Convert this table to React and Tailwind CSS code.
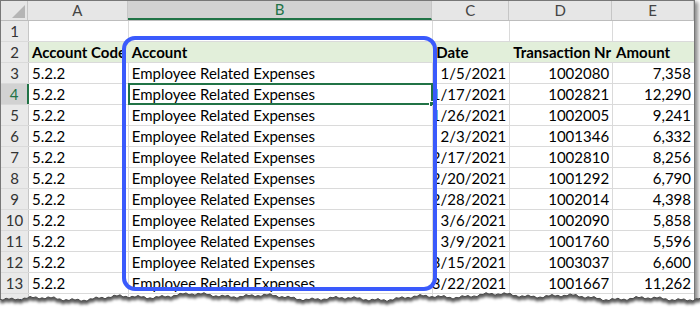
const cols = ['w-[28px]', 'w-[100px]', 'w-[305px]', 'w-[77px]', 'w-[103px]', 'w-[82px]']

const rows = [
  ['1/5/2021', '1002080', '7,358'],
  ['1/17/2021', '1002821', '12,290'],
  ['1/26/2021', '1002005', '9,241'],
  ['2/3/2021', '1001346', '6,332'],
  ['2/17/2021', '1002810', '8,256'],
  ['2/20/2021', '1001292', '6,790'],
  ['2/28/2021', '1002014', '4,398'],
  ['3/6/2021', '1002090', '5,858'],
  ['3/9/2021', '1001760', '5,596'],
  ['3/15/2021', '1003037', '6,600'],
  ['3/22/2021', '1001667', '11,262'],
]

// jagged bottom edge of the torn sheet
function tearPoints() {
  const pts = []
  for (let x = 0, i = 0; x <= 702; x += 3, i++) {
    const y =
      14 +
      2.0 * Math.sin(x * 0.021 + 0.4) +
      1.4 * Math.sin(x * 0.083 + 1.3) +
      0.9 * Math.sin(x * 0.29 + 2.1) +
      (i % 2 ? 0.7 : -0.6)
    pts.push([x, Math.max(8, y)])
  }
  return pts
}

function TornEdge() {
  const pts = tearPoints()
  const line = pts.map(([x, y]) => `${x},${y.toFixed(1)}`).join(' ')
  const below = `${line} 702,40 0,40`
  const shadow = pts.map(([x, y]) => `${x},${(y + 3.5).toFixed(1)}`).join(' ') + ' 702,-10 0,-10'
  return (
    <svg className="absolute left-0 top-[283px]" width="700" height="29" viewBox="0 0 700 29">
      <defs>
        <filter id="soft" x="-5%" y="-50%" width="110%" height="200%">
          <feGaussianBlur stdDeviation="1.7" />
        </filter>
        <clipPath id="under">
          <polygon points={below} />
        </clipPath>
      </defs>
      <polygon points={below} fill="#fff" />
      <g clipPath="url(#under)">
        <polygon points={shadow} fill="rgba(0,0,0,0.65)" filter="url(#soft)" />
      </g>
      <polyline points={line} fill="none" stroke="#4a4a4a" strokeWidth="1" />
    </svg>
  )
}

function ColHeader({ label, active, w }) {
  return (
    <div
      className={`${w} h-full flex items-center justify-center border-r border-[#c6c6c6] ${
        active ? 'bg-[#d2d2d2] text-[#217346] border-b-2 border-b-[#217346]' : 'text-[#444]'
      }`}
    >
      {label}
    </div>
  )
}

function RowHeader({ n, active }) {
  return (
    <div
      className={`w-[28px] h-full flex items-center justify-center ${
        active
          ? 'bg-[#d2d2d2] text-[#217346] border-r-2 border-[#217346]'
          : 'bg-[#e9e9e9] text-[#333] border-r border-[#c6c6c6]'
      }`}
    >
      {n}
    </div>
  )
}

function Cell({ w, children, right, bold, green, last }) {
  return (
    <div
      className={`${w} h-full flex items-center overflow-hidden whitespace-nowrap px-[3px] ${
        right ? 'justify-end' : ''
      } ${bold ? 'font-bold' : ''} ${
        green ? 'bg-[#e2efda]' : last ? '' : 'border-r border-[#dadada]'
      }`}
    >
      {children}
    </div>
  )
}

export default function App() {
  return (
    <div className="w-[700px] h-[312px] bg-white overflow-hidden relative font-['Lato','Liberation_Sans',sans-serif] text-[15px] text-black">
      <div className="w-[695px] h-[320px] border-t border-l border-r border-[#777] shadow-[3px_2px_4px_rgba(0,0,0,0.45)] bg-white">
        {/* column letters */}
        <div className="flex h-[20px] border-b border-[#bdbdbd] bg-[#e6e6e6]">
          <div className="w-[27px] h-full border-r border-[#c6c6c6] relative bg-[#e6e6e6]">
            <div className="absolute right-[2px] bottom-[2px] w-0 h-0 border-l-[13px] border-l-transparent border-b-[13px] border-b-[#b5b5b5]" />
          </div>
          <ColHeader w={cols[1]} label="A" />
          <ColHeader w={cols[2]} label="B" active />
          <ColHeader w={cols[3]} label="C" />
          <ColHeader w={cols[4]} label="D" />
          <ColHeader w="w-[82px]" label="E" />
        </div>

        {/* row 1 */}
        <div className="flex h-[21px] border-b border-[#dadada]">
          <RowHeader n={1} />
          <Cell w={cols[1]} />
          <Cell w={cols[2]} />
          <Cell w={cols[3]} />
          <Cell w={cols[4]} />
          <Cell w="w-[81px]" last />
        </div>

        {/* row 2 headings */}
        <div className="flex h-[21px] border-b border-[#dadada]">
          <RowHeader n={2} />
          <Cell w={cols[1]} bold green>Account Code</Cell>
          <Cell w={cols[2]} bold green>Account</Cell>
          <Cell w={cols[3]} bold green>Date</Cell>
          <Cell w={cols[4]} bold green>Transaction Nr</Cell>
          <Cell w="w-[81px]" bold green>Amount</Cell>
        </div>

        {rows.map(([date, nr, amount], i) => (
          <div key={i} className="flex h-[21px] border-b border-[#dadada]">
            <RowHeader n={i + 3} active={i === 1} />
            <Cell w={cols[1]}>5.2.2</Cell>
            <div className={`${cols[2]} h-full relative flex items-center px-[3px] border-r border-[#dadada] whitespace-nowrap`}>
              Employee Related Expenses
              {i === 1 && (
                <div className="absolute -left-[1px] -top-[1px] -right-[1px] -bottom-[1px] border-2 border-[#217346]">
                  <div className="absolute -right-[4px] -bottom-[4px] w-[6px] h-[6px] bg-[#217346] border border-white" />
                </div>
              )}
            </div>
            <Cell w={cols[3]} right>{date}</Cell>
            <Cell w={cols[4]} right>{nr}</Cell>
            <Cell w="w-[81px]" right last>{amount}</Cell>
          </div>
        ))}

        <div className="flex h-[21px] border-b border-[#dadada]">
          <RowHeader n={14} />
          <Cell w={cols[1]} />
          <Cell w={cols[2]} />
          <Cell w={cols[3]} />
          <Cell w={cols[4]} />
          <Cell w="w-[81px]" last />
        </div>
      </div>

      {/* highlight around the Account column */}
      <div className="absolute left-[122px] top-[36px] w-[315px] h-[255px] border-4 border-[#3a5afc] rounded-[13px] pointer-events-none" />

      <TornEdge />
    </div>
  )
}
